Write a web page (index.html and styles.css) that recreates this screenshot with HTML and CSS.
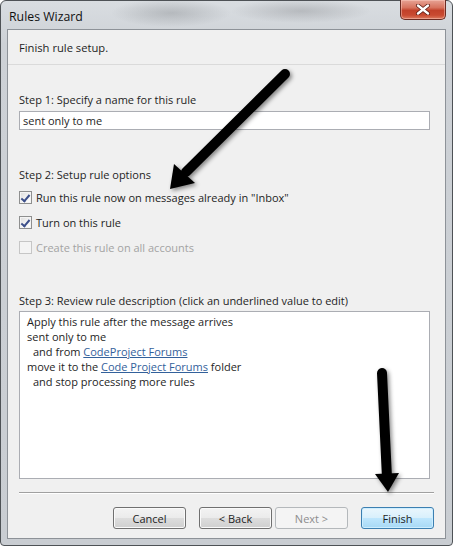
FILE: index.html
```html
<!DOCTYPE html>
<html lang="en">
<head>
    <meta charset="UTF-8">
    <title>Rules Wizard</title>
    <link rel="stylesheet" href="styles.css">
</head>
<body>

    <!-- Dialog window -->
    <div class="window">
        <div class="titlebar">
            <span class="title">Rules Wizard</span>
            <div class="close-btn">
                <svg width="16" height="11" viewBox="0 0 16 11">
                    <path d="M3 1.5 L13 9.5 M13 1.5 L3 9.5" stroke="#5a1a12" stroke-width="4" stroke-linecap="round"/>
                    <path d="M3 1.5 L13 9.5 M13 1.5 L3 9.5" stroke="#fff" stroke-width="2.4" stroke-linecap="round"/>
                </svg>
            </div>
        </div>

        <div class="client">
            <div class="header">Finish rule setup.</div>

            <div class="content">
                <div class="step step-1">Step 1: Specify a name for this rule</div>
                <div class="textbox">sent only to me</div>

                <div class="step step-2">Step 2: Setup rule options</div>
                <div class="option">
                    <span class="check checked"></span> Run this rule now on messages already in "Inbox"
                </div>
                <div class="option">
                    <span class="check checked"></span> Turn on this rule
                </div>
                <div class="option disabled">
                    <span class="check"></span> Create this rule on all accounts
                </div>

                <div class="step step-3">Step 3: Review rule description (click an underlined value to edit)</div>
                <div class="description">
                    <div>Apply this rule after the message arrives</div>
                    <div>sent only to me</div>
                    <div class="indent">and from <a href="#">CodeProject Forums</a></div>
                    <div>move it to the <a href="#">Code Project Forums</a> folder</div>
                    <div class="indent">and stop processing more rules</div>
                </div>
            </div>

            <div class="footer">
                <div class="separator"></div>
                <div class="buttons">
                    <button class="btn">Cancel</button>
                    <button class="btn btn-back">&lt; Back</button>
                    <button class="btn btn-next" disabled>Next &gt;</button>
                    <button class="btn btn-finish">Finish</button>
                </div>
            </div>
        </div>
    </div>

    <!-- Annotation arrows drawn over the screenshot -->
    <svg class="arrows" width="453" height="547" viewBox="0 0 453 547">
        <defs>
            <filter id="shadow" x="-20%" y="-20%" width="140%" height="140%">
                <feDropShadow dx="2" dy="2" stdDeviation="2" flood-color="#000" flood-opacity="0.45"/>
            </filter>
        </defs>
        <g filter="url(#shadow)" fill="#000">
            <line x1="285" y1="74" x2="186" y2="172" stroke="#000" stroke-width="10" stroke-linecap="round"/>
            <polygon points="170,189 174,164 195,183"/>
            <line x1="382" y1="373" x2="387" y2="478" stroke="#000" stroke-width="10" stroke-linecap="round"/>
            <polygon points="375,474 399,473 388,492"/>
        </g>
    </svg>

</body>
</html>
```

FILE: styles.css
```css
* {
    margin: 0;
    padding: 0;
    box-sizing: border-box;
}

body {
    background: #fff;
    width: 453px;
    height: 547px;
    position: relative;
    overflow: hidden;
    font-family: 'Open Sans', 'Noto Sans', sans-serif;
    font-size: 11px;
    color: #1e1e1e;
}

/* Window frame */
.window {
    width: 453px;
    height: 546px;
    border: 1px solid #4e5256;
    border-radius: 6px 6px 4px 4px;
    padding: 0 6px 6px 6px;
    display: flex;
    flex-direction: column;
    background:
        radial-gradient(ellipse 60px 14px at 170px 12px, rgba(120, 124, 128, 0.35), transparent),
        radial-gradient(ellipse 70px 12px at 300px 10px, rgba(110, 112, 116, 0.3), transparent),
        linear-gradient(180deg, #d9dde1 0%, #cdd1d6 8%, #c9cdd2 100%);
}

.titlebar {
    height: 28px;
    display: flex;
    align-items: center;
    justify-content: space-between;
    position: relative;
}

.title {
    padding-left: 2px;
    padding-top: 2px;
    font-size: 12.3px;
    color: #111;
}

.close-btn {
    position: absolute;
    top: -1px;
    right: 0;
    width: 46px;
    height: 20px;
    border: 1px solid #6b2b22;
    border-top: none;
    border-radius: 0 0 5px 5px;
    background: linear-gradient(180deg, #e7a395 0%, #d7735e 40%, #c2412a 55%, #c94a31 80%, #dc7a5f 100%);
    box-shadow: inset 0 0 0 1px rgba(255, 210, 200, 0.45);
    display: flex;
    align-items: center;
    justify-content: center;
}

/* Client area */
.client {
    flex: 1;
    border: 1px solid #8d9298;
    background: #f0f0f0;
    display: flex;
    flex-direction: column;
}

.header {
    height: 35px;
    padding-left: 11px;
    display: flex;
    align-items: center;
    border-bottom: 1px solid #dadada;
    font-size: 11.2px;
}

.content {
    padding: 0 15px 0 11px;
}

.step {
    line-height: 15px;
}

.step-1 {
    margin-top: 27px;
}

.step-2 {
    margin-top: 37px;
}

.step-3 {
    margin-top: 33px;
}

.textbox {
    margin-top: 4px;
    height: 19px;
    border: 1px solid #abadb3;
    background: #fff;
    padding-left: 3px;
    line-height: 17px;
}

.option {
    height: 25px;
    display: flex;
    align-items: center;
    gap: 4px;
}

.step-2 + .option {
    margin-top: 3px;
}

.option.disabled {
    color: #a3a3a3;
}

.check {
    width: 13px;
    height: 13px;
    border: 1px solid #8e8f8f;
    background: linear-gradient(135deg, #dcdcdc 0%, #f6f6f6 60%, #fff 100%);
    box-shadow: inset 0 0 0 1px #f4f4f4;
    position: relative;
}

.option.disabled .check {
    border-color: #c6c6c6;
    background: #f4f4f4;
}

.check.checked::after {
    content: "";
    position: absolute;
    left: 3px;
    top: 1px;
    width: 3px;
    height: 7px;
    border: solid #3c4f8a;
    border-width: 0 2px 2px 0;
    transform: rotate(40deg);
}

.description {
    margin-top: 3px;
    height: 168px;
    border: 1px solid #abadb3;
    background: #fff;
    padding: 2px 7px;
    line-height: 15px;
}

.description .indent {
    padding-left: 6px;
}

.description a {
    color: #33619b;
    text-decoration: underline;
}

/* Footer with wizard buttons */
.footer {
    margin-top: auto;
    padding-bottom: 9px;
}

.separator {
    margin: 0 11px;
    border-top: 1px solid #a0a0a0;
    border-bottom: 1px solid #fff;
}

.buttons {
    margin-top: 13px;
    padding-right: 11px;
    display: flex;
    justify-content: flex-end;
}

.btn {
    width: 73px;
    height: 22px;
    border: 1px solid #707070;
    border-radius: 3px;
    background: linear-gradient(180deg, #f3f3f3 0%, #ebebeb 48%, #dddddd 52%, #cfcfcf 100%);
    box-shadow: inset 0 0 0 1px #fafafa;
    font-family: 'Open Sans', 'Noto Sans', sans-serif;
    font-size: 11px;
    color: #1e1e1e;
    margin-left: 13px;
}

.btn-back + .btn-next {
    margin-left: 3px;
}

.btn-next {
    border-color: #b4b8bb;
    background: #f4f4f4;
    box-shadow: none;
    color: #8d8d8d;
}

.btn-finish {
    border-color: #3c7fb1;
    background: linear-gradient(180deg, #eaf6fd 0%, #d9f0fc 48%, #bee6fd 52%, #a7d9f5 100%);
    box-shadow: inset 0 0 0 1px #cdeeff;
}

/* Overlay arrows */
.arrows {
    position: absolute;
    top: 0;
    left: 0;
    pointer-events: none;
}
```
